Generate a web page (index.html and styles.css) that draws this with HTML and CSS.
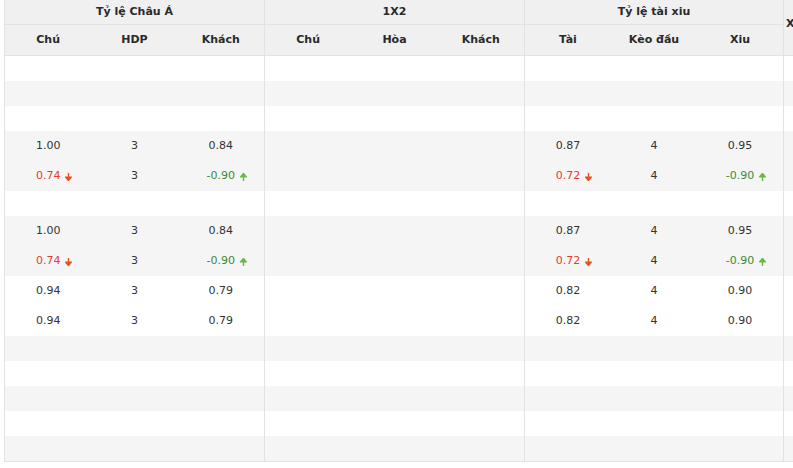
FILE: index.html
```html
<!DOCTYPE html>
<html>
<head>
    <meta charset="utf-8">
    <title>Tỷ lệ kèo</title>
    <link rel="stylesheet" href="styles.css">
</head>
<body>
    <div class="board">
        <div class="head">
            <div class="group g-wide">
                <div class="group-title">Tỷ lệ Châu Á</div>
                <div class="group-cols"><span>Chú</span><span>HDP</span><span>Khách</span></div>
            </div>
            <div class="group g-wide">
                <div class="group-title">1X2</div>
                <div class="group-cols"><span>Chú</span><span>Hòa</span><span>Khách</span></div>
            </div>
            <div class="group g-narrow">
                <div class="group-title">Tỷ lệ tài xiu</div>
                <div class="group-cols"><span>Tài</span><span>Kèo đầu</span><span>Xiu</span></div>
            </div>
            <div class="extra-head">X</div>
        </div>

        <div class="row">
            <div class="group g-wide"><div class="cell"></div><div class="cell"></div><div class="cell"></div></div>
            <div class="group g-wide"><div class="cell"></div><div class="cell"></div><div class="cell"></div></div>
            <div class="group g-narrow"><div class="cell"></div><div class="cell"></div><div class="cell"></div></div>
            <div class="extra"></div>
        </div>
        <div class="row">
            <div class="group g-wide"><div class="cell"></div><div class="cell"></div><div class="cell"></div></div>
            <div class="group g-wide"><div class="cell"></div><div class="cell"></div><div class="cell"></div></div>
            <div class="group g-narrow"><div class="cell"></div><div class="cell"></div><div class="cell"></div></div>
            <div class="extra"></div>
        </div>
        <div class="row">
            <div class="group g-wide"><div class="cell"></div><div class="cell"></div><div class="cell"></div></div>
            <div class="group g-wide"><div class="cell"></div><div class="cell"></div><div class="cell"></div></div>
            <div class="group g-narrow"><div class="cell"></div><div class="cell"></div><div class="cell"></div></div>
            <div class="extra"></div>
        </div>

        <!-- early odds / live odds -->
        <div class="row">
            <div class="group g-wide">
                <div class="cell">
                    <div class="line"><span class="val">1.00</span></div>
                    <div class="line"><span class="val down">0.74<svg class="arrow" viewBox="0 0 7 8"><path d="M3.5 0v5.5M0.8 4.2L3.5 7.6L6.2 4.2Z"/></svg></span></div>
                </div>
                <div class="cell">
                    <div class="line"><span class="val">3</span></div>
                    <div class="line"><span class="val">3</span></div>
                </div>
                <div class="cell">
                    <div class="line"><span class="val">0.84</span></div>
                    <div class="line"><span class="val up">-0.90<svg class="arrow" viewBox="0 0 7 8"><path d="M3.5 8v-5.5M0.8 3.8L3.5 0.4L6.2 3.8Z"/></svg></span></div>
                </div>
            </div>
            <div class="group g-wide"><div class="cell"></div><div class="cell"></div><div class="cell"></div></div>
            <div class="group g-narrow">
                <div class="cell">
                    <div class="line"><span class="val">0.87</span></div>
                    <div class="line"><span class="val down">0.72<svg class="arrow" viewBox="0 0 7 8"><path d="M3.5 0v5.5M0.8 4.2L3.5 7.6L6.2 4.2Z"/></svg></span></div>
                </div>
                <div class="cell">
                    <div class="line"><span class="val">4</span></div>
                    <div class="line"><span class="val">4</span></div>
                </div>
                <div class="cell">
                    <div class="line"><span class="val">0.95</span></div>
                    <div class="line"><span class="val up">-0.90<svg class="arrow" viewBox="0 0 7 8"><path d="M3.5 8v-5.5M0.8 3.8L3.5 0.4L6.2 3.8Z"/></svg></span></div>
                </div>
            </div>
            <div class="extra"></div>
        </div>

        <div class="row">
            <div class="group g-wide"><div class="cell"></div><div class="cell"></div><div class="cell"></div></div>
            <div class="group g-wide"><div class="cell"></div><div class="cell"></div><div class="cell"></div></div>
            <div class="group g-narrow"><div class="cell"></div><div class="cell"></div><div class="cell"></div></div>
            <div class="extra"></div>
        </div>

        <div class="row">
            <div class="group g-wide">
                <div class="cell">
                    <div class="line"><span class="val">1.00</span></div>
                    <div class="line"><span class="val down">0.74<svg class="arrow" viewBox="0 0 7 8"><path d="M3.5 0v5.5M0.8 4.2L3.5 7.6L6.2 4.2Z"/></svg></span></div>
                </div>
                <div class="cell">
                    <div class="line"><span class="val">3</span></div>
                    <div class="line"><span class="val">3</span></div>
                </div>
                <div class="cell">
                    <div class="line"><span class="val">0.84</span></div>
                    <div class="line"><span class="val up">-0.90<svg class="arrow" viewBox="0 0 7 8"><path d="M3.5 8v-5.5M0.8 3.8L3.5 0.4L6.2 3.8Z"/></svg></span></div>
                </div>
            </div>
            <div class="group g-wide"><div class="cell"></div><div class="cell"></div><div class="cell"></div></div>
            <div class="group g-narrow">
                <div class="cell">
                    <div class="line"><span class="val">0.87</span></div>
                    <div class="line"><span class="val down">0.72<svg class="arrow" viewBox="0 0 7 8"><path d="M3.5 0v5.5M0.8 4.2L3.5 7.6L6.2 4.2Z"/></svg></span></div>
                </div>
                <div class="cell">
                    <div class="line"><span class="val">4</span></div>
                    <div class="line"><span class="val">4</span></div>
                </div>
                <div class="cell">
                    <div class="line"><span class="val">0.95</span></div>
                    <div class="line"><span class="val up">-0.90<svg class="arrow" viewBox="0 0 7 8"><path d="M3.5 8v-5.5M0.8 3.8L3.5 0.4L6.2 3.8Z"/></svg></span></div>
                </div>
            </div>
            <div class="extra"></div>
        </div>

        <div class="row">
            <div class="group g-wide">
                <div class="cell">
                    <div class="line"><span class="val">0.94</span></div>
                    <div class="line"><span class="val">0.94</span></div>
                </div>
                <div class="cell">
                    <div class="line"><span class="val">3</span></div>
                    <div class="line"><span class="val">3</span></div>
                </div>
                <div class="cell">
                    <div class="line"><span class="val">0.79</span></div>
                    <div class="line"><span class="val">0.79</span></div>
                </div>
            </div>
            <div class="group g-wide"><div class="cell"></div><div class="cell"></div><div class="cell"></div></div>
            <div class="group g-narrow">
                <div class="cell">
                    <div class="line"><span class="val">0.82</span></div>
                    <div class="line"><span class="val">0.82</span></div>
                </div>
                <div class="cell">
                    <div class="line"><span class="val">4</span></div>
                    <div class="line"><span class="val">4</span></div>
                </div>
                <div class="cell">
                    <div class="line"><span class="val">0.90</span></div>
                    <div class="line"><span class="val">0.90</span></div>
                </div>
            </div>
            <div class="extra"></div>
        </div>

        <div class="row">
            <div class="group g-wide"><div class="cell"></div><div class="cell"></div><div class="cell"></div></div>
            <div class="group g-wide"><div class="cell"></div><div class="cell"></div><div class="cell"></div></div>
            <div class="group g-narrow"><div class="cell"></div><div class="cell"></div><div class="cell"></div></div>
            <div class="extra"></div>
        </div>
        <div class="row">
            <div class="group g-wide"><div class="cell"></div><div class="cell"></div><div class="cell"></div></div>
            <div class="group g-wide"><div class="cell"></div><div class="cell"></div><div class="cell"></div></div>
            <div class="group g-narrow"><div class="cell"></div><div class="cell"></div><div class="cell"></div></div>
            <div class="extra"></div>
        </div>
        <div class="row">
            <div class="group g-wide"><div class="cell"></div><div class="cell"></div><div class="cell"></div></div>
            <div class="group g-wide"><div class="cell"></div><div class="cell"></div><div class="cell"></div></div>
            <div class="group g-narrow"><div class="cell"></div><div class="cell"></div><div class="cell"></div></div>
            <div class="extra"></div>
        </div>
        <div class="row">
            <div class="group g-wide"><div class="cell"></div><div class="cell"></div><div class="cell"></div></div>
            <div class="group g-wide"><div class="cell"></div><div class="cell"></div><div class="cell"></div></div>
            <div class="group g-narrow"><div class="cell"></div><div class="cell"></div><div class="cell"></div></div>
            <div class="extra"></div>
        </div>
        <div class="row">
            <div class="group g-wide"><div class="cell"></div><div class="cell"></div><div class="cell"></div></div>
            <div class="group g-wide"><div class="cell"></div><div class="cell"></div><div class="cell"></div></div>
            <div class="group g-narrow"><div class="cell"></div><div class="cell"></div><div class="cell"></div></div>
            <div class="extra"></div>
        </div>
    </div>
</body>
</html>
```

FILE: styles.css
```css
/* Base */
* {
    margin: 0;
    padding: 0;
    box-sizing: border-box;
}

html, body {
    overflow: hidden;
}

body {
    background: #fff;
    color: #333;
    font-family: "DejaVu Sans", Verdana, sans-serif;
    font-size: 11px;
}

/* Board */
.board {
    width: 880px;
    margin-left: 4px;
    border-left: 1px solid #e2e2e2;
    border-bottom: 1px solid #e2e2e2;
}

.group {
    display: flex;
    border-right: 1px solid #e2e2e2;
}

.g-wide {
    width: 260px;
    flex: none;
}

.g-narrow {
    width: 259px;
    flex: none;
}

/* Header */
.head {
    display: flex;
    background: #f0f0f0;
    border-bottom: 1px solid #e2e2e2;
    font-weight: bold;
    color: #2a2a2a;
}

.head .group {
    flex-direction: column;
}

.group-title {
    height: 25px;
    line-height: 24px;
    text-align: center;
    border-bottom: 1px solid #e2e2e2;
}

.group-cols {
    display: flex;
    height: 30px;
    line-height: 30px;
}

.group-cols span {
    flex: 1;
    text-align: center;
}

.extra-head {
    flex: 1;
    padding: 17px 0 0 2px;
    white-space: nowrap;
}

/* Body rows */
.row {
    display: flex;
    min-height: 25px;
}

.row:nth-child(odd) {
    background: #f5f5f5;
}

.cell {
    flex: 1;
    text-align: center;
}

.extra {
    flex: 1;
}

.line {
    height: 30px;
    line-height: 30px;
}

.val {
    display: inline-block;
    position: relative;
}

.down {
    color: #e2402c;
}

.up {
    color: #3b8a35;
}

.arrow {
    position: absolute;
    left: 100%;
    top: 12px;
    width: 7px;
    height: 8px;
    margin-left: 5px;
}

.down .arrow {
    fill: #e8521f;
    stroke: #e8521f;
    stroke-width: 1.4;
}

.up .arrow {
    fill: #67b945;
    stroke: #67b945;
    stroke-width: 1.4;
}
```
